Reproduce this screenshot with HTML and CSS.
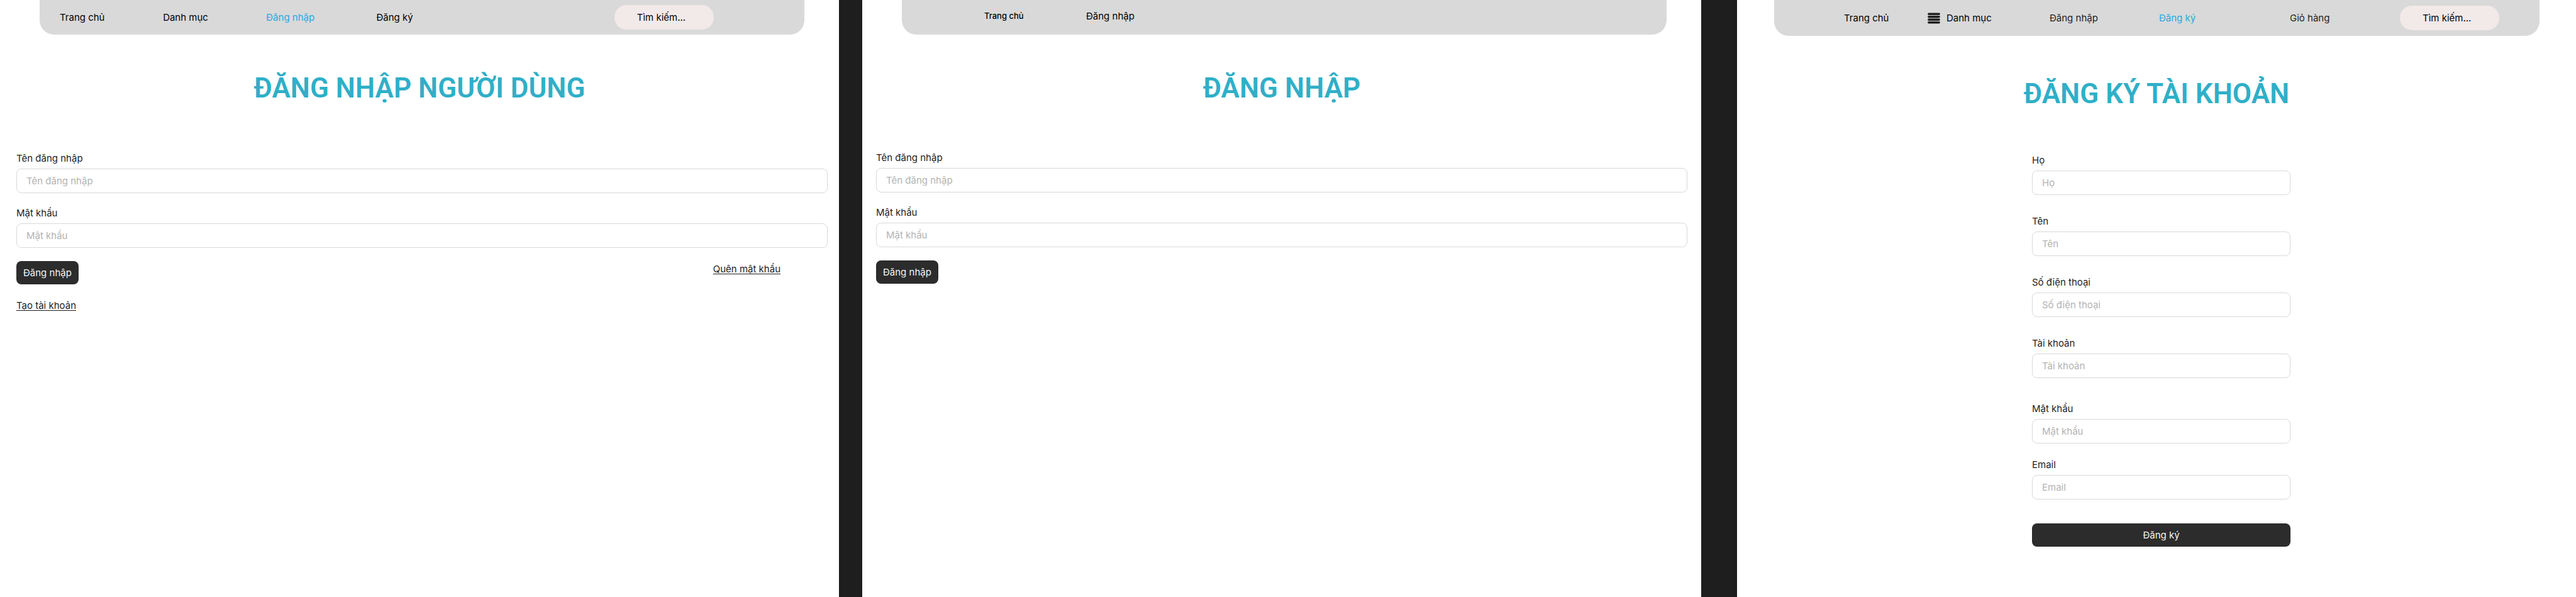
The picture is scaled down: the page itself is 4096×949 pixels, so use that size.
FILE: index.html
```html
<!DOCTYPE html>
<html lang="vi">
<head>
  <meta charset="utf-8">
  <meta name="viewport" content="width=device-width, initial-scale=1">
  <title>Đăng nhập và đăng ký</title>
  <link rel="stylesheet" href="styles.css">
</head>
<body>
  <main class="board">
    <section class="screen screen--user">
      <header class="topbar">
        <nav class="topbar__items topbar__items--user" aria-label="Điều hướng người dùng">
          <a class="topbar__link" href="#">Trang chủ</a>
          <a class="topbar__link" href="#">Danh mục</a>
          <a class="topbar__link topbar__link--active" href="#">Đăng nhập</a>
          <a class="topbar__link" href="#">Đăng ký</a>
          <input class="search" type="text" placeholder="Tìm kiếm..." aria-label="Tìm kiếm">
        </nav>
      </header>
      <h1 class="title">ĐĂNG NHẬP NGƯỜI DÙNG</h1>
      <form class="form">
        <div class="field">
          <label class="field__label" for="user-name">Tên đăng nhập</label>
          <input class="field__input" id="user-name" type="text" placeholder="Tên đăng nhập">
        </div>
        <div class="field">
          <label class="field__label" for="user-pass">Mật khẩu</label>
          <input class="field__input" id="user-pass" type="password" placeholder="Mật khẩu">
        </div>
        <div class="form__row">
          <button class="button" type="button">Đăng nhập</button>
          <a class="form__link" href="#">Quên mật khẩu</a>
        </div>
        <a class="form__link" href="#">Tạo tài khoản</a>
      </form>
    </section>

    <section class="screen screen--admin">
      <header class="topbar">
        <nav class="topbar__items topbar__items--admin" aria-label="Điều hướng quản trị">
          <a class="topbar__link topbar__link--strong" href="#">Trang chủ</a>
          <a class="topbar__link" href="#">Đăng nhập</a>
        </nav>
      </header>
      <h1 class="title">ĐĂNG NHẬP</h1>
      <form class="form">
        <div class="field">
          <label class="field__label" for="admin-name">Tên đăng nhập</label>
          <input class="field__input" id="admin-name" type="text" placeholder="Tên đăng nhập">
        </div>
        <div class="field">
          <label class="field__label" for="admin-pass">Mật khẩu</label>
          <input class="field__input" id="admin-pass" type="password" placeholder="Mật khẩu">
        </div>
        <button class="button" type="button">Đăng nhập</button>
      </form>
    </section>

    <section class="screen screen--register">
      <header class="topbar">
        <nav class="topbar__items topbar__items--register" aria-label="Điều hướng đăng ký">
          <a class="topbar__link" href="#">Trang chủ</a>
          <a class="topbar__link topbar__link--icon" href="#">
            <svg class="menu-icon" viewBox="0 0 22 20" aria-hidden="true">
              <path d="M2 2.5H20M2 7.5H20M2 12.5H20M2 17.5H20"/>
            </svg>
            Danh mục
          </a>
          <a class="topbar__link topbar__link--soft" href="#">Đăng nhập</a>
          <a class="topbar__link topbar__link--active" href="#">Đăng ký</a>
          <a class="topbar__link topbar__link--soft" href="#">Giỏ hàng</a>
          <input class="search" type="text" placeholder="Tìm kiếm..." aria-label="Tìm kiếm">
        </nav>
      </header>
      <h1 class="title">ĐĂNG KÝ TÀI KHOẢN</h1>
      <form class="form">
        <div class="form__group">
          <div class="field">
            <label class="field__label" for="reg-last">Họ</label>
            <input class="field__input" id="reg-last" type="text" placeholder="Họ">
          </div>
          <div class="field">
            <label class="field__label" for="reg-first">Tên</label>
            <input class="field__input" id="reg-first" type="text" placeholder="Tên">
          </div>
          <div class="field">
            <label class="field__label" for="reg-phone">Số điện thoại</label>
            <input class="field__input" id="reg-phone" type="tel" placeholder="Số điện thoại">
          </div>
          <div class="field">
            <label class="field__label" for="reg-account">Tài khoản</label>
            <input class="field__input" id="reg-account" type="text" placeholder="Tài khoản">
          </div>
        </div>
        <div class="form__group form__group--tight">
          <div class="field">
            <label class="field__label" for="reg-pass">Mật khẩu</label>
            <input class="field__input" id="reg-pass" type="password" placeholder="Mật khẩu">
          </div>
          <div class="field">
            <label class="field__label" for="reg-email">Email</label>
            <input class="field__input" id="reg-email" type="email" placeholder="Email">
          </div>
        </div>
        <button class="button button--wide" type="button">Đăng ký</button>
      </form>
    </section>
  </main>
</body>
</html>
```

FILE: styles.css
```css
* {
  box-sizing: border-box;
}

body {
  margin: 0;
  background: #1e1e1e;
  color: #1e1e1e;
  font-family: Inter, "Noto Sans", sans-serif;
  font-size: 15px;
  line-height: 21px;
}

input,
button {
  font: inherit;
}

/* Three screens, parted by strips of the dark canvas */
.board {
  display: grid;
  grid-template-columns: 1fr 37px 1fr 57px 1fr;
  min-height: 100vh;
}

.screen {
  display: flex;
  flex-direction: column;
  background: #fff;
}

.screen--user {
  grid-column: 1;
}

.screen--admin {
  grid-column: 3;
}

.screen--register {
  grid-column: 5;
}

/* Top bar */
.topbar {
  display: grid;
  height: 55px;
  margin: 0 55px 0 63px;
  background: #d9d9d9;
  border-radius: 0 0 23px 23px;
}

.screen--register .topbar {
  height: 57px;
  margin: 0 58px 0 59px;
}

.topbar__items {
  display: grid;
  align-items: center;
  justify-items: start;
}

.topbar__items--user {
  grid-template-columns: 164fr 164fr 175fr 378fr 302fr;
  padding-left: 32px;
}

.topbar__items--admin {
  grid-template-columns: 162fr 923fr;
  padding: 0 0 4px 131px;
}

.topbar__items--register {
  grid-template-columns: 133fr 194fr 174fr 208fr 175fr 222fr;
  padding-left: 111px;
}

.topbar__link {
  color: #000;
  text-decoration: none;
}

.topbar__link--soft {
  color: #1e1e1e;
}

.topbar__link--active {
  color: #27a9e1;
}

.topbar__link--strong {
  font-size: 13px;
  font-weight: 500;
}

.topbar__link--icon {
  display: flex;
  align-items: center;
  gap: 10px;
}

.menu-icon {
  width: 20px;
  height: 18px;
  fill: none;
  stroke: #1e1e1e;
  stroke-width: 4;
  stroke-linecap: round;
}

.search {
  width: 158px;
  height: 39px;
  padding: 0 20px 0 36px;
  border: 0;
  border-radius: 19px;
  background: #f2e9e9;
  color: #000;
}

.search::placeholder {
  color: #000;
  opacity: 1;
}

/* Title */
.title {
  margin: 57px 0 0;
  color: #2fafc8;
  font-family: Roboto, sans-serif;
  font-size: 44px;
  font-weight: 600;
  line-height: 56px;
  text-align: center;
}

.screen--register .title {
  margin-top: 64px;
}

/* Forms */
.form {
  display: flex;
  flex-direction: column;
  align-items: flex-start;
  gap: 21px;
  margin: 73px 18px 0 26px;
}

.screen--admin .form {
  margin: 72px 22px 0;
}

.screen--register .form {
  display: grid;
  grid-template-columns: 469fr 411fr 454fr;
  gap: 38px 0;
  margin: 67px 0 0;
}

.screen--register .form > * {
  grid-column: 2;
}

.form__group {
  display: grid;
  gap: 31px;
  width: 100%;
}

.form__group--tight {
  gap: 23px;
}

.form__row {
  display: flex;
  align-items: flex-start;
  justify-content: space-between;
  width: 100%;
  padding-right: 75px;
}

.form__link {
  color: #1e1e1e;
  line-height: 25px;
  text-decoration: underline;
  text-decoration-skip-ink: none;
  text-underline-offset: 2px;
}

.field {
  display: grid;
  gap: 6px;
  width: 100%;
}

.field__input {
  width: 100%;
  height: 39px;
  padding: 0 15px;
  border: 1px solid #d9d9d9;
  border-radius: 8px;
  background: #fff;
  color: #1e1e1e;
}

.field__input::placeholder {
  color: #b3b3b3;
  opacity: 1;
}

.button {
  height: 37px;
  padding: 0 11px;
  border: 0;
  border-radius: 8px;
  background: #2c2c2c;
  color: #f5f5f5;
}

.button--wide {
  width: 100%;
}
```
